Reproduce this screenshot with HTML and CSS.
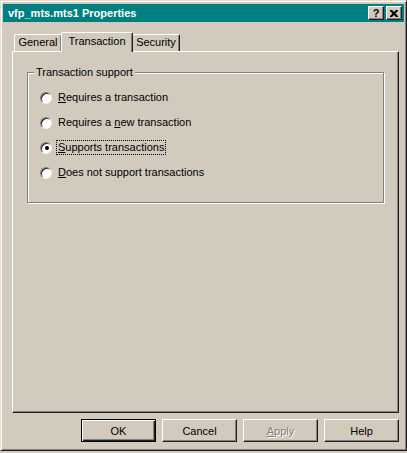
FILE: index.html
```html
<!DOCTYPE html>
<html lang="en">
<head>
  <meta charset="UTF-8">
  <title>vfp_mts.mts1 Properties</title>
  <link rel="stylesheet" href="styles.css">
</head>
<body>

  <div class="window">
    <div class="titlebar">
      <span class="title">vfp_mts.mts1 Properties</span>
      <div class="caption-btns">
        <button class="cap-btn help-btn">?</button>
        <button class="cap-btn">
          <svg width="8" height="7" viewBox="0 0 8 7">
            <path d="M0 0h2l2 2 2-2h2v1l-2.5 2.5 2.5 2.5v1h-2l-2-2-2 2h-2v-1l2.5-2.5-2.5-2.5z" fill="#000"/>
          </svg>
        </button>
      </div>
    </div>

    <div class="content">
      <div class="tabs">
        <div class="tab tab-general">General</div>
        <div class="tab tab-active">Transaction</div>
        <div class="tab tab-security">Security</div>
      </div>

      <div class="panel">
        <fieldset class="group">
          <legend>Transaction support</legend>
          <div class="option">
            <span class="radio"></span>
            <span class="label"><u>R</u>equires a transaction</span>
          </div>
          <div class="option">
            <span class="radio"></span>
            <span class="label">Requires a <u>n</u>ew transaction</span>
          </div>
          <div class="option">
            <span class="radio checked"></span>
            <span class="label focused"><u>S</u>upports transactions</span>
          </div>
          <div class="option">
            <span class="radio"></span>
            <span class="label"><u>D</u>oes not support transactions</span>
          </div>
        </fieldset>
      </div>

      <div class="buttons">
        <button class="btn btn-default">OK</button>
        <button class="btn">Cancel</button>
        <button class="btn btn-disabled"><u>A</u>pply</button>
        <button class="btn">Help</button>
      </div>
    </div>
  </div>

</body>
</html>
```

FILE: styles.css
```css
body {
  margin: 0;
  background: #d2cabd;
  font-family: "Liberation Sans", Arial, sans-serif;
  font-size: 11px;
  color: #000;
}

.window {
  width: 407px;
  height: 451px;
  box-sizing: border-box;
  border: 1px solid;
  border-color: #e4ded2 #202020 #202020 #e4ded2;
  box-shadow: inset 1px 1px 0 #fff, inset -1px -1px 0 #808080;
  padding: 3px 2px 2px 2px;
}

.titlebar {
  height: 18px;
  background: #008080;
  display: flex;
  align-items: center;
  justify-content: space-between;
  padding: 0 2px 0 5px;
}

.title {
  color: #fff;
  font-weight: bold;
  font-size: 11px;
}

.caption-btns {
  display: flex;
  gap: 2px;
}

.cap-btn {
  width: 16px;
  height: 14px;
  padding: 0;
  margin: 0;
  background: #d2cabd;
  border: 1px solid;
  border-color: #fff #202020 #202020 #fff;
  box-shadow: inset -1px -1px 0 #808080;
  display: flex;
  align-items: center;
  justify-content: center;
  font-family: "Liberation Sans", Arial, sans-serif;
  font-size: 11px;
  font-weight: bold;
  line-height: 1;
  color: #000;
}

.content {
  padding: 10px 5px 0 9px;
}

.tabs {
  display: flex;
  align-items: flex-end;
  height: 19px;
  padding-left: 2px;
}

.tab {
  box-sizing: border-box;
  height: 17px;
  border: 1px solid;
  border-color: #fff #202020 transparent #fff;
  border-bottom: none;
  border-radius: 2px 2px 0 0;
  box-shadow: inset -1px 0 0 #808080;
  text-align: center;
  line-height: 15px;
  background: #d2cabd;
}

.tab-general {
  width: 48px;
}

.tab-security {
  width: 48px;
}

.tab-active {
  width: 72px;
  height: 20px;
  margin: 0 -1px -1px -1px;
  position: relative;
  z-index: 1;
  line-height: 16px;
}

.panel {
  height: 362px;
  box-sizing: border-box;
  border: 1px solid;
  border-color: #fff #202020 #202020 #fff;
  box-shadow: inset -1px -1px 0 #808080;
  padding: 14px 14px 0 14px;
}

.group {
  margin: 0;
  border: 1px solid #808080;
  box-shadow: inset 1px 1px 0 #fff, 1px 1px 0 #fff;
  padding: 6px 0 17px 6px;
}

.group legend {
  padding: 0 2px;
  background: #d2cabd;
  line-height: 13px;
}

.option {
  display: flex;
  align-items: center;
  height: 25px;
  padding-left: 6px;
}

.radio {
  width: 12px;
  height: 12px;
  box-sizing: border-box;
  border-radius: 50%;
  background: #fff;
  border: 1px solid;
  border-color: #808080 #f4f0e8 #f4f0e8 #808080;
  box-shadow: inset 1px 1px 0 #202020;
  display: flex;
  align-items: center;
  justify-content: center;
}

.radio.checked::after {
  content: "";
  width: 4px;
  height: 4px;
  border-radius: 50%;
  background: #000;
  margin: 1px 0 0 1px;
}

.label {
  margin-left: 4px;
  padding: 0 1px;
  border: 1px dotted transparent;
  line-height: 13px;
}

.label.focused {
  border-color: #000;
}

.buttons {
  display: flex;
  justify-content: flex-end;
  gap: 6px;
  margin-top: 6px;
}

.btn {
  width: 75px;
  height: 23px;
  margin: 0;
  padding: 0;
  background: #d2cabd;
  border: 1px solid;
  border-color: #fff #202020 #202020 #fff;
  box-shadow: inset -1px -1px 0 #808080;
  font-family: "Liberation Sans", Arial, sans-serif;
  font-size: 11px;
  color: #000;
}

.btn-default {
  border: 1px solid #000;
  box-shadow: inset 1px 1px 0 #fff, inset -1px -1px 0 #202020, inset -2px -2px 0 #808080;
}

.btn-disabled {
  color: #808080;
  text-shadow: 1px 1px 0 #fff;
}

.btn-disabled u {
  text-decoration-color: #808080;
}
```
